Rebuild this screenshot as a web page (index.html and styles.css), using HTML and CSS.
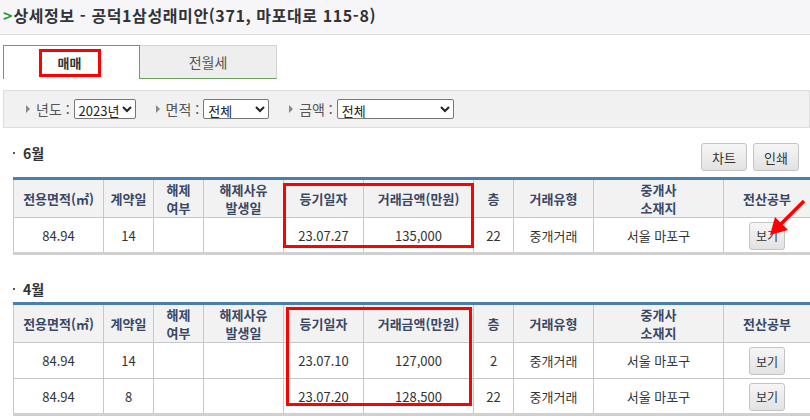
FILE: index.html
```html
<!DOCTYPE html>
<html lang="ko">
<head>
    <meta charset="UTF-8">
    <title>상세정보</title>
    <link rel="stylesheet" href="styles.css">
</head>
<body>
    <!-- Title -->
    <div class="title-bar">
        <span class="chevron">&gt;</span>
        <h1>상세정보 - 공덕1삼성래미안(371, 마포대로 115-8)</h1>
    </div>

    <!-- Tabs -->
    <div class="tabs">
        <div class="tab active"><span class="mark">매매</span></div>
        <div class="tab">전월세</div>
    </div>

    <!-- Filters -->
    <div class="filter">
        <span class="tri"></span><label>년도 :</label>
        <select class="sel sel-year"><option>2023년</option></select>
        <span class="tri"></span><label>면적 :</label>
        <select class="sel sel-area"><option>전체</option></select>
        <span class="tri"></span><label>금액 :</label>
        <select class="sel sel-price"><option>전체</option></select>
    </div>

    <!-- June -->
    <div class="month">
        <div class="month-head">
            <span class="month-label">6월</span>
            <div class="actions">
                <button class="btn">차트</button>
                <button class="btn">인쇄</button>
            </div>
        </div>
        <div class="table-wrap">
            <table class="deals">
                <colgroup>
                    <col style="width:90px"><col style="width:50px"><col style="width:50px"><col style="width:80px"><col style="width:80px">
                    <col style="width:110px"><col style="width:40px"><col style="width:80px"><col style="width:130px"><col style="width:87px">
                </colgroup>
                <tr>
                    <th>전용면적(㎡)</th><th>계약일</th><th>해제<br>여부</th><th>해제사유<br>발생일</th><th>등기일자</th>
                    <th>거래금액(만원)</th><th>층</th><th>거래유형</th><th>중개사<br>소재지</th><th>전산공부</th>
                </tr>
                <tr>
                    <td>84.94</td><td>14</td><td></td><td></td><td>23.07.27</td>
                    <td>135,000</td><td>22</td><td>중개거래</td><td>서울 마포구</td><td><button class="btn btn-view">보기</button></td>
                </tr>
            </table>
            <div class="box box-june"></div>
            <svg class="arrow" width="50" height="45" viewBox="0 0 50 45">
                <line x1="41" y1="4" x2="18" y2="27" stroke="#f00" stroke-width="3.5"/>
                <polygon points="7,38 12,20 25,33" fill="#f00"/>
            </svg>
        </div>
    </div>

    <!-- April -->
    <div class="month">
        <div class="month-head">
            <span class="month-label">4월</span>
        </div>
        <div class="table-wrap">
            <table class="deals">
                <colgroup>
                    <col style="width:90px"><col style="width:50px"><col style="width:50px"><col style="width:80px"><col style="width:80px">
                    <col style="width:110px"><col style="width:40px"><col style="width:80px"><col style="width:130px"><col style="width:87px">
                </colgroup>
                <tr>
                    <th>전용면적(㎡)</th><th>계약일</th><th>해제<br>여부</th><th>해제사유<br>발생일</th><th>등기일자</th>
                    <th>거래금액(만원)</th><th>층</th><th>거래유형</th><th>중개사<br>소재지</th><th>전산공부</th>
                </tr>
                <tr>
                    <td>84.94</td><td>14</td><td></td><td></td><td>23.07.10</td>
                    <td>127,000</td><td>2</td><td>중개거래</td><td>서울 마포구</td><td><button class="btn btn-view">보기</button></td>
                </tr>
                <tr>
                    <td>84.94</td><td>8</td><td></td><td></td><td>23.07.20</td>
                    <td>128,500</td><td>22</td><td>중개거래</td><td>서울 마포구</td><td><button class="btn btn-view">보기</button></td>
                </tr>
            </table>
            <div class="box box-april"></div>
        </div>
    </div>
</body>
</html>
```

FILE: styles.css
```css
/* Reset */
* {
    margin: 0;
    padding: 0;
    box-sizing: border-box;
}

html, body {
    width: 810px;
    height: 420px;
    overflow: hidden;
    background: #fff;
    font-family: "Noto Sans CJK KR", "Noto Sans", sans-serif;
    color: #333;
}

/* Title */
.title-bar {
    height: 35px;
    background: #f6f6f8;
    border-bottom: 1px solid #ddd;
    display: flex;
    align-items: center;
    padding: 0 0 4px 3px;
}

.chevron {
    color: #2e9a2e;
    font-weight: bold;
    font-size: 16px;
    margin-right: 1px;
}

.title-bar h1 {
    font-size: 16px;
    font-weight: bold;
    color: #333;
    letter-spacing: 0.6px;
}

/* Tabs */
.tabs {
    display: flex;
    margin: 10px 0 0 3px;
}

.tab {
    width: 137px;
    height: 34px;
    display: flex;
    align-items: center;
    justify-content: center;
    background: #eee;
    border: 1px solid #d4d4d4;
    border-left: none;
    border-bottom: 1px solid #6a9e5e;
    font-size: 14px;
    color: #555;
}

.tab.active {
    background: #fff;
    border: 1px solid #6a9e5e;
    border-bottom: none;
    font-weight: bold;
    color: #333;
}

.tab .mark {
    width: 62px;
    height: 28px;
    border: 3px solid #f00;
    display: flex;
    align-items: center;
    justify-content: center;
    font-size: 13px;
    margin-left: -4px;
}

/* Filter bar */
.filter {
    display: flex;
    align-items: center;
    height: 38px;
    margin: 11px 0 0 3px;
    padding-left: 22px;
    background: #f1f1f1;
    border: 1px solid #ddd;
    font-size: 14px;
    color: #555;
}

.tri {
    width: 0;
    height: 0;
    border-left: 4px solid #888;
    border-top: 4px solid transparent;
    border-bottom: 4px solid transparent;
    margin-right: 6px;
}

.filter label {
    margin-right: 4px;
}

.sel {
    height: 20px;
    border: 1px solid #777;
    border-radius: 2px;
    background: #fff;
    font-family: "Noto Sans CJK KR", sans-serif;
    font-size: 13px;
    color: #222;
    margin-right: 20px;
}

.sel-year { width: 62px; }
.sel-area { width: 66px; }
.sel-price { width: 117px; }

/* Month sections */
.month-head {
    display: flex;
    justify-content: space-between;
    align-items: flex-start;
    height: 28px;
    margin: 15px 0 6px 0;
    padding: 0 11px 0 13px;
}

.month + .month .month-head {
    height: 20px;
    margin: 24px 0 3px 0;
}

.month-label {
    font-size: 14px;
    font-weight: bold;
    color: #333;
    line-height: 20px;
    padding-left: 10px;
    position: relative;
}

.month-label::before {
    content: '';
    position: absolute;
    left: 0;
    top: 9px;
    width: 2px;
    height: 2px;
    background: #555;
}

.actions {
    display: flex;
    gap: 6px;
}

.btn {
    height: 28px;
    padding: 0 10px;
    border: 1px solid #c4c4c4;
    border-radius: 3px;
    background: linear-gradient(#f6f6f6, #e2e2e2);
    font-family: "Noto Sans CJK KR", sans-serif;
    font-size: 13px;
    color: #333;
}

.actions .btn {
    width: 46px;
}

/* Tables */
.table-wrap {
    position: relative;
    margin-left: 13px;
}

.deals {
    width: 797px;
    border-collapse: collapse;
    table-layout: fixed;
    border-top: 3px solid #4a7fab;
    border-bottom: 3px solid #d0d0d0;
    border-left: 1px solid #c8c8c8;
}

.deals th, .deals td {
    border: 1px solid #c8c8c8;
    text-align: center;
    font-size: 13px;
    padding: 0;
}

.deals tr:first-child th {
    border-top: none;
}

.deals th {
    height: 39px;
    background: #f2f2f2;
    color: #3a4866;
    font-weight: bold;
    line-height: 18px;
}

.deals td {
    height: 36px;
    color: #333;
}

.btn-view {
    width: 36px;
    height: 28px;
    padding: 0;
    font-size: 12px;
    margin-top: 1px;
}

/* Red annotation boxes */
.box {
    position: absolute;
    border: 3px solid #f00;
    pointer-events: none;
}

.box-june {
    left: 270px;
    top: 6px;
    width: 191px;
    height: 65px;
}

.box-april {
    left: 273px;
    top: 5px;
    width: 186px;
    height: 99px;
}

.arrow {
    position: absolute;
    left: 750px;
    top: 20px;
}
```
